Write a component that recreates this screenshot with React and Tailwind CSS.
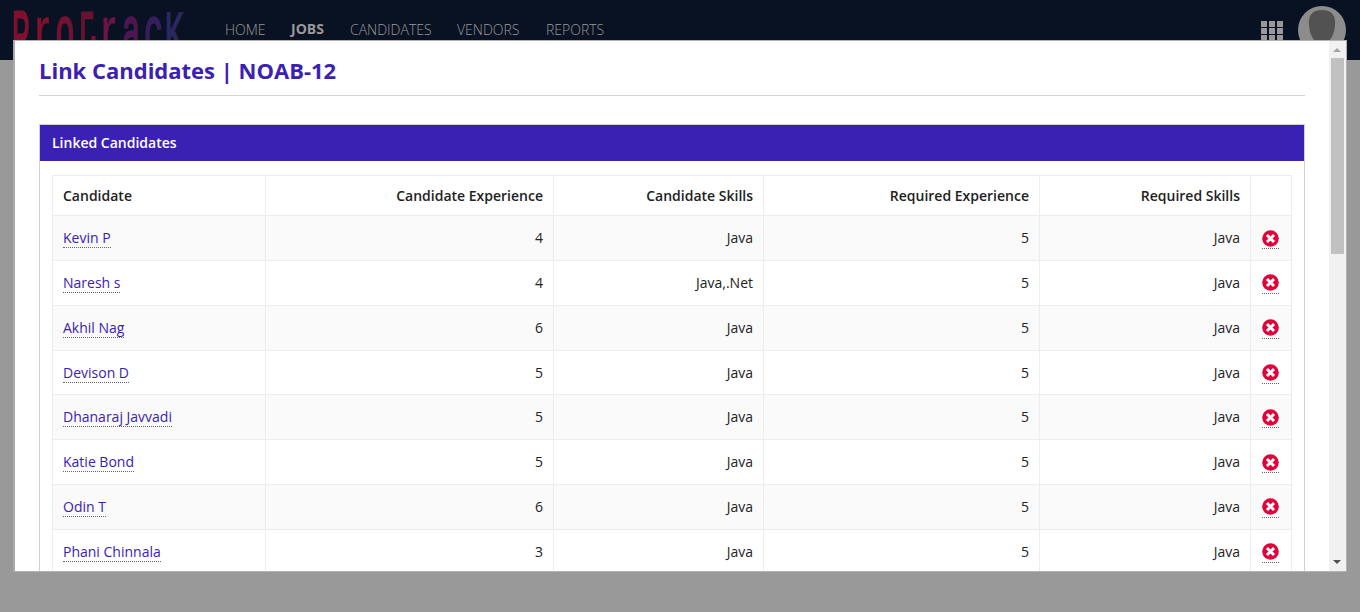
const rows = [
  ['Kevin P', 4, 'Java', 'h-[45px]', 'mt-0'],
  ['Naresh s', 4, 'Java,.Net', 'h-[45px]', '-mt-px'],
  ['Akhil Nag', 6, 'Java', 'h-[45px]', '-mt-px'],
  ['Devison D', 5, 'Java', 'h-[44px]', '-mt-px'],
  ['Dhanaraj Javvadi', 5, 'Java', 'h-[45px]', 'mt-0'],
  ['Katie Bond', 5, 'Java', 'h-[45px]', 'mt-0'],
  ['Odin T', 6, 'Java', 'h-[45px]', '-mt-px'],
  ['Phani Chinnala', 3, 'Java', 'h-[45px]', '-mt-px'],
];

const columns = 'grid grid-cols-[213px_288px_210px_276px_211px_41px]';
const cell = 'border-r border-b border-[#ededed] px-[10px]';

/* letter, left, baseline, horizontal scale, vertical scale, outline, colour */
const letters = [
  ['P', 12, 58, 0.64, 1.66, 1.8, '#80102f'],
  ['r', 34.3, 54, 1.15, 1.72, 0.2, '#80102f'],
  ['o', 55.8, 54, 0.8, 1.72, 1.5, '#701230'],
  ['Γ', 79.5, 55, 0.62, 1.52, 2, '#66132f'],
  ['r', 100.5, 54, 1.15, 1.72, 0.2, '#6c1448'],
  ['a', 122.5, 54, 0.76, 1.72, 1.5, '#4d1650'],
  ['c', 144.5, 54, 0.86, 1.72, 1.5, '#351f5a'],
  ['K', 165, 53, 0.7, 1.45, 1.5, '#2c285f'],
];

function Logo() {
  return (
    <svg className="h-[60px] w-[200px] shrink-0" viewBox="0 0 200 60">
      {letters.map(([ch, x, y, sx, sy, outline, color]) => (
        <text
          key={x}
          transform={`translate(${x} ${y}) scale(${sx} ${sy})`}
          fill={color}
          stroke={color}
          strokeWidth={outline}
          fontFamily="Liberation Sans, sans-serif"
          fontSize="40"
        >
          {ch}
        </text>
      ))}
      <rect x="91.500" y="36" width="4" height="6" fill="#80102f" />
    </svg>
  );
}

function RemoveIcon({ shift }) {
  return (
    <svg className={`h-[17px] w-[17px] ${shift}`} viewBox="0 0 17 17">
      <circle cx="8.5" cy="8.5" r="8.3" fill="#e00339" />
      <path d="M5 5l7 7M12 5l-7 7" stroke="#fff" strokeWidth="3" />
    </svg>
  );
}

function Header() {
  return (
    <header className="flex h-[60px] bg-[#091222] text-sm font-light text-[#999]">
      <Logo />
      <nav className="flex h-[60px] flex-1 items-center pl-[25px] leading-5">
        <a className="w-[66px]">HOME</a>
        <a className="-mt-[2px] w-[59px] font-bold">JOBS</a>
        <a className="w-[107px]">CANDIDATES</a>
        <a className="w-[89px]">VENDORS</a>
        <a>REPORTS</a>
      </nav>
      <svg className="mt-[21px] h-[23px] w-[22px]" viewBox="0 0 22 23" fill="#999">
        {[0, 7, 14].map((y) =>
          [0, 8, 16].map((x) => <rect key={`${x}-${y}`} x={x} y={y} width="6" height="6" />)
        )}
      </svg>
      <svg className="mt-[6px] mr-[14px] ml-[15px] h-[48px] w-[48px]" viewBox="0 0 48 48">
        <circle cx="24" cy="24" r="24" fill="#8c8c8c" />
        <path d="M24 4C14 4 10 10 11 19c.6 8 4 19 13 19s12.500-11 13-19C38 10 34 4 24 4z" fill="#525252" />
      </svg>
    </header>
  );
}

function Scrollbar() {
  return (
    <div className="flex w-[17px] shrink-0 flex-col items-center bg-[#f1f1f1]">
      <svg className="h-[17px] w-[17px]" viewBox="0 0 17 17">
        <path d="M4 11l4-4 4 4z" fill="#a3a3a3" />
      </svg>
      <div className="h-[196px] w-[13px] bg-[#c1c1c1]" />
      <div className="flex-1" />
      <svg className="h-[17px] w-[17px]" viewBox="0 0 17 17">
        <path d="M4 6l4 4 4-4z" fill="#505050" />
      </svg>
    </div>
  );
}

function CandidateTable() {
  return (
    <div className="border-t border-l border-[#ededed]">
      <div className={`${columns} h-[40px] text-right leading-[39px] font-semibold`}>
        <div className={`${cell} text-left`}>Candidate</div>
        <div className={cell}>Candidate Experience</div>
        <div className={cell}>Candidate Skills</div>
        <div className={cell}>Required Experience</div>
        <div className={cell}>Required Skills</div>
        <div className={cell} />
      </div>
      {rows.map(([name, experience, skills, height, shift]) => (
        <div
          key={name}
          className={`${columns} ${height} text-right leading-[20px] odd:bg-white even:bg-[#fafafa]`}
        >
          <div className={`${cell} pt-[12px] text-left`}>
            <a className="inline-block h-[20px] border-b border-dotted border-[#666] text-[#3b21b3]">{name}</a>
          </div>
          <div className={`${cell} pt-[12px]`}>{experience}</div>
          <div className={`${cell} pt-[12px]`}>{skills}</div>
          <div className={`${cell} pt-[12px]`}>5</div>
          <div className={`${cell} pt-[12px]`}>Java</div>
          <div className={`${cell} pt-[14px]`}>
            <a className="ml-[1px] flex h-[19px] w-[17px] border-b border-dotted border-[#666]">
              <RemoveIcon shift={shift} />
            </a>
          </div>
        </div>
      ))}
    </div>
  );
}

export default function App() {
  return (
    <div className="relative h-[612px] w-[1360px] overflow-hidden bg-[#999] font-['Open_Sans',sans-serif] text-sm">
      <Header />
      <div className="absolute top-[40px] left-[13px] flex h-[532px] w-[1334px] overflow-hidden border border-l-2 border-[#b3b3b3] border-l-[#a9a9a9] bg-white">
        <main className="flex-1 px-6 text-[#222]">
          <h1 className="h-[55px] border-b border-[#d3d3d3] pt-[14px] text-[22px] leading-[30px] font-bold text-[#3b21b3]">
            Link Candidates | NOAB-12
          </h1>
          <section className="mt-[28px] border border-[#d0d0d0]">
            <h2 className="h-[36px] bg-[#3b21b3] px-3 leading-[35px] font-semibold text-white">
              Linked Candidates
            </h2>
            <div className="px-3 pt-[14px]">
              <CandidateTable />
            </div>
          </section>
        </main>
        <Scrollbar />
      </div>
    </div>
  );
}
